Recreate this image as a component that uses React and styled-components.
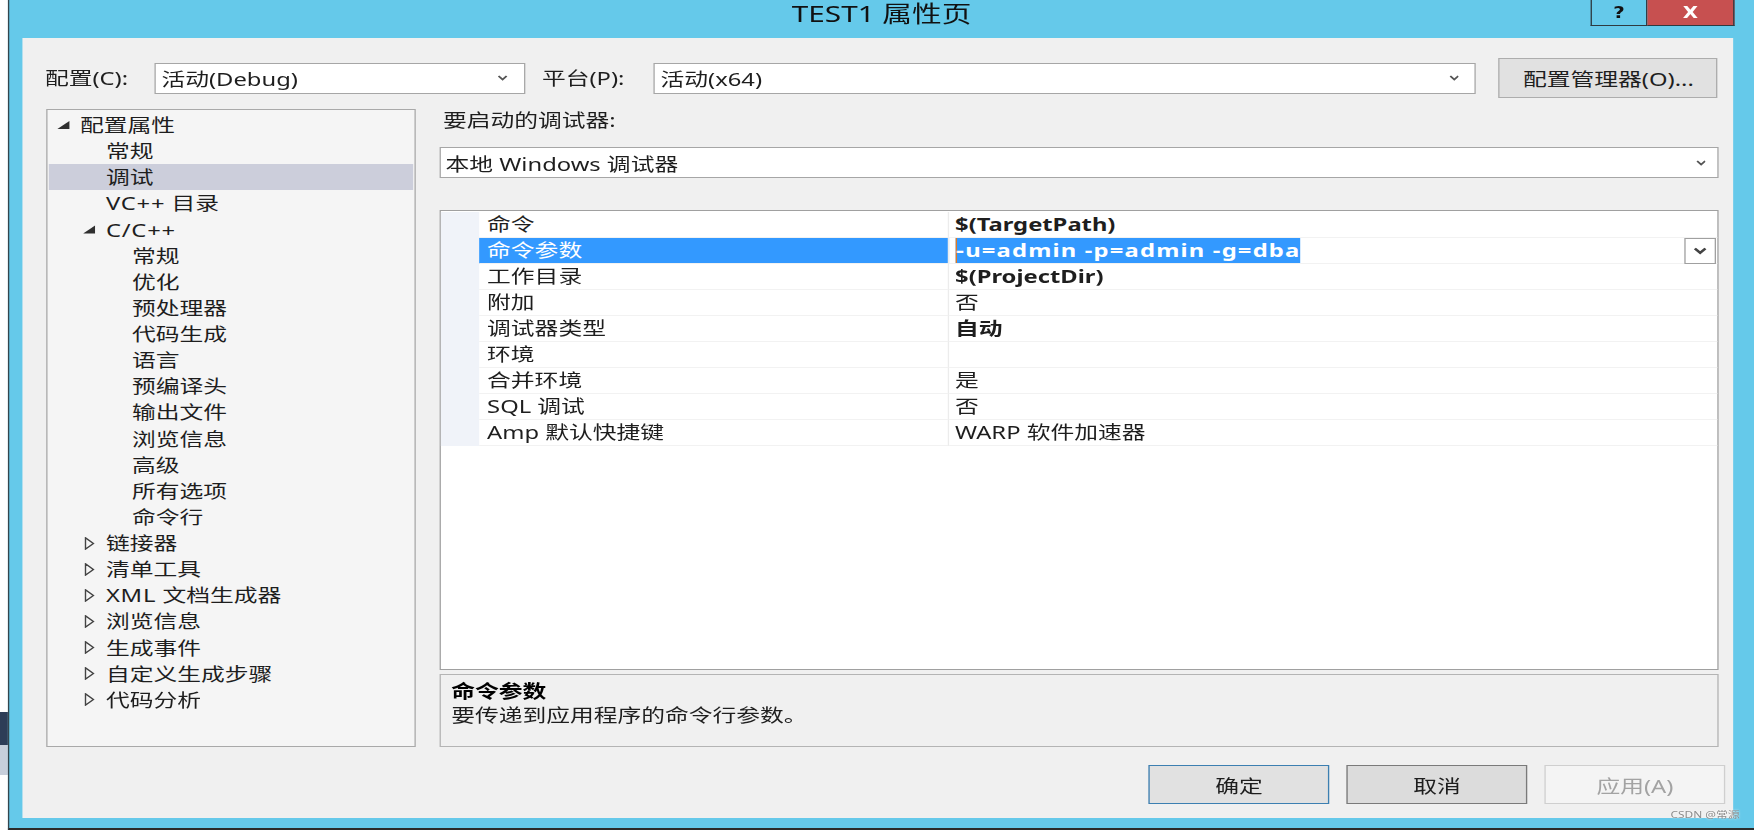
import React from "react";
import styled, { createGlobalStyle } from "styled-components";

// the captured dialog is stretched horizontally, so the page is laid out narrow and widened
const STRETCH = 1.32;

const GlobalStyle = createGlobalStyle`
  html, body { margin: 0; padding: 0; background: #fff; overflow: hidden; }
  body {
    font-family: "Noto Sans", "Noto Sans CJK SC", sans-serif;
    font-size: 18px;
    color: #1e1e1e;
  }
  * { box-sizing: border-box; }
`;

const Screen = styled.div`
  display: flex;
  width: ${1754 / STRETCH}px;
  height: 830px;
  transform: scaleX(${STRETCH});
  transform-origin: 0 0;
`;

const Backdrop = styled.div`
  width: ${8 / STRETCH}px;
  flex-shrink: 0;
  display: flex;
  flex-direction: column;
  background: #fff;
`;

const BackdropPatch = styled.div`
  height: ${(p) => p.$h}px;
  margin-top: ${(p) => p.$top || 0}px;
  background: ${(p) => p.$color};
`;

const Window = styled.div`
  position: relative;
  flex: 1;
  display: flex;
  flex-direction: column;
  background: #65c9ea;
  border-left: 1px solid #34454d;
  border-bottom: 2px solid #2b2b2b;
`;

const TitleBar = styled.div`
  height: 38px;
  flex-shrink: 0;
  display: grid;
  grid-template-columns: 1fr auto 1fr;
  align-items: start;
`;

const Title = styled.div`
  font-size: 22.5px;
  line-height: 28px;
  color: #111;
  white-space: nowrap;
`;

const CaptionButtons = styled.div`
  justify-self: end;
  display: flex;
  margin-right: 14.4px;
`;

const CaptionButton = styled.div`
  width: ${(p) => p.$w}px;
  height: 26px;
  display: flex;
  align-items: center;
  justify-content: center;
  background: ${(p) => (p.$close ? "#c75050" : "transparent")};
  border: 1px solid #2e3a40;
  border-top: none;
  & + & { border-left: none; }
  color: ${(p) => (p.$close ? "#fff" : "#111")};
  font-family: "DejaVu Sans", sans-serif;
  font-weight: bold;
  font-size: 15px;
`;

const Client = styled.div`
  flex: 1;
  display: flex;
  flex-direction: column;
  background: #f0f0f0;
  margin: 0 15.9px 10px 10.3px;
`;

const TopRow = styled.div`
  display: flex;
  align-items: center;
  height: 40px;
  margin-top: 20px;
  padding-left: 16.7px;
`;

const FieldLabel = styled.div`
  width: ${(p) => p.$w}px;
  margin-left: ${(p) => p.$ml || 0}px;
  flex-shrink: 0;
  white-space: nowrap;
  line-height: 22px;
`;

const Combo = styled.div`
  width: ${(p) => (p.$w ? `${p.$w}px` : "auto")};
  flex-shrink: 0;
  height: 31px;
  margin-top: ${(p) => p.$mt || 0}px;
  background: #fff;
  border: 1px solid #a6a6a6;
  display: flex;
  align-items: center;
  justify-content: space-between;
  padding: 0 ${(p) => p.$pr || 12}px 0 4px;
  white-space: nowrap;
`;

const PushButton = styled.button`
  font: inherit;
  color: inherit;
  width: ${(p) => p.$w}px;
  height: ${(p) => p.$h || 40}px;
  margin-left: ${(p) => p.$ml || 0}px;
  padding: 0;
  flex-shrink: 0;
  background: #e1e1e1;
  border: 1px solid #adadad;
  white-space: nowrap;
`;

const Main = styled.div`
  display: flex;
  gap: 17.4px;
  height: 638px;
  margin-top: 11px;
  padding: 0 10.6px 0 17.4px;
`;

const Tree = styled.ul`
  width: 280.4px;
  flex-shrink: 0;
  margin: 0;
  padding: 2px 1px 0;
  list-style: none;
  background: #f5f5f5;
  border: 1px solid #a9a9a9;
`;

const TreeRow = styled.li`
  height: 26.14px;
  line-height: 26.14px;
  display: flex;
  align-items: center;
  padding-left: ${(p) => 6.3 + p.$level * 19.7}px;
  background: ${(p) => (p.$selected ? "#cccedb" : "transparent")};
  white-space: nowrap;
`;

const Twisty = styled.span`
  width: 17.5px;
  flex-shrink: 0;
  display: flex;
  align-items: center;
  padding-left: ${(p) => (p.$closed ? 1.5 : 0)}px;
`;

const Latin = styled.span`
  letter-spacing: 0.6px;
`;

const RightPane = styled.div`
  flex: 1;
  min-width: 0;
  display: flex;
  flex-direction: column;
`;

const PaneLabel = styled.div`
  height: 22px;
  line-height: 22px;
  padding-left: 3px;
`;

const Grid = styled.div`
  margin-top: 32px;
  height: 460px;
  background: #fff;
  border: 1px solid #a0a0a0;
  padding-top: 1px;
`;

const GridRow = styled.div`
  display: flex;
  height: 26px;
`;

const Gutter = styled.div`
  width: 29.5px;
  flex-shrink: 0;
  background: #f0f3f9;
`;

const NameCell = styled.div`
  width: 356px;
  flex-shrink: 0;
  padding-left: 6px;
  line-height: 25px;
  white-space: nowrap;
  border-bottom: 1px solid #f2f2f2;
  border-right: 1px solid #ececec;
  background: ${(p) => (p.$selected ? "#3399ff" : "transparent")};
  color: ${(p) => (p.$selected ? "#fff" : "inherit")};
`;

const ValueCell = styled.div`
  flex: 1;
  display: flex;
  align-items: center;
  justify-content: space-between;
  padding-left: 4.5px;
  line-height: 25px;
  white-space: nowrap;
  border-bottom: 1px solid #f2f2f2;
  font-weight: ${(p) => (p.$bold ? 700 : 400)};
`;

const EditedValue = styled.span`
  background: #3399ff;
  color: #fff;
  font-weight: 700;
  letter-spacing: 0.9px;
  border-left: 1px solid #e07b24;
  line-height: 25px;
`;

const DropButton = styled.div`
  width: 23.5px;
  height: 26px;
  margin-right: 1.5px;
  align-self: flex-start;
  display: flex;
  align-items: center;
  justify-content: center;
  background: #fff;
  border: 1px solid #a0a0a0;
`;

const Description = styled.div`
  margin-top: 4px;
  height: 73px;
  border: 1px solid #b4b4b4;
  background: #f0f0f0;
  padding: 4px 0 0 8.3px;
  line-height: 24px;
`;

const DescTitle = styled.div`
  font-weight: 700;
  color: #000;
`;

const ButtonRow = styled.div`
  display: flex;
  justify-content: flex-end;
  gap: 13.6px;
  margin-top: 18px;
  padding-right: 6.1px;
`;

const DialogButton = styled.button`
  font: inherit;
  width: 136.4px;
  height: 39px;
  padding: 0;
  background: ${(p) => (p.$disabled ? "#f4f4f4" : p.$default ? "#e1e1e1" : "#dcdcdc")};
  border: 1px solid
    ${(p) => (p.$disabled ? "#cfcfcf" : p.$default ? "#3c7fb1" : "#7a7a7a")};
  color: ${(p) => (p.$disabled ? "#a3a3a3" : "#1e1e1e")};
`;

const Watermark = styled.div`
  position: absolute;
  right: 10.8px;
  bottom: 7px;
  font-size: 9px;
  line-height: 12px;
  color: #8c8c8c;
  text-shadow: 0 0 2px #fff;
  white-space: nowrap;
`;

function Chevron({ bold }) {
  return bold ? (
    <svg width="10" height="8" viewBox="0 0 10 8">
      <polyline points="1,1.6 5,5.8 9,1.6" fill="none" stroke="#444" strokeWidth="2.2" />
    </svg>
  ) : (
    <svg width="7.5" height="6" viewBox="0 0 7.5 6">
      <polyline points="0.7,1 3.75,4.6 6.8,1" fill="none" stroke="#555" strokeWidth="1.5" />
    </svg>
  );
}

function OpenTwisty() {
  return (
    <svg width="9.6" height="8.4" viewBox="0 0 10 9" preserveAspectRatio="none">
      <polygon points="10,0 10,9 0,9" fill="#2f2f2f" />
    </svg>
  );
}

function ClosedTwisty() {
  return (
    <svg width="7.6" height="13" viewBox="0 0 7.6 13">
      <polygon points="0.7,0.8 6.8,6.5 0.7,12.2" fill="none" stroke="#444" strokeWidth="1.2" />
    </svg>
  );
}

const treeItems = [
  { text: "配置属性", level: 0, twisty: "open" },
  { text: "常规", level: 1 },
  { text: "调试", level: 1, selected: true },
  { text: "VC++", rest: " 目录", level: 1 },
  { text: "C/C++", level: 1, twisty: "open", latin: true },
  { text: "常规", level: 2 },
  { text: "优化", level: 2 },
  { text: "预处理器", level: 2 },
  { text: "代码生成", level: 2 },
  { text: "语言", level: 2 },
  { text: "预编译头", level: 2 },
  { text: "输出文件", level: 2 },
  { text: "浏览信息", level: 2 },
  { text: "高级", level: 2 },
  { text: "所有选项", level: 2 },
  { text: "命令行", level: 2 },
  { text: "链接器", level: 1, twisty: "closed" },
  { text: "清单工具", level: 1, twisty: "closed" },
  { text: "XML", rest: " 文档生成器", level: 1, twisty: "closed" },
  { text: "浏览信息", level: 1, twisty: "closed" },
  { text: "生成事件", level: 1, twisty: "closed" },
  { text: "自定义生成步骤", level: 1, twisty: "closed" },
  { text: "代码分析", level: 1, twisty: "closed" },
];

const properties = [
  { name: "命令", value: "$(TargetPath)", bold: true },
  { name: "命令参数", value: "-u=admin -p=admin -g=dba", editing: true },
  { name: "工作目录", value: "$(ProjectDir)", bold: true },
  { name: "附加", value: "否" },
  { name: "调试器类型", value: "自动", bold: true },
  { name: "环境", value: "" },
  { name: "合并环境", value: "是" },
  { name: "SQL 调试", value: "否" },
  { name: "Amp 默认快捷键", value: "WARP 软件加速器" },
];

export default function App() {
  return (
    <>
      <GlobalStyle />
      <Screen>
        <Backdrop>
          <BackdropPatch $top={712} $h={33} $color="#2d3d57" />
          <BackdropPatch $h={30} $color="#c7cfdb" />
        </Backdrop>

        <Window>
          <TitleBar>
            <span />
            <Title>TEST1 属性页</Title>
            <CaptionButtons>
              <CaptionButton $w={42.4}>?</CaptionButton>
              <CaptionButton $w={66.7} $close>X</CaptionButton>
            </CaptionButtons>
          </TitleBar>

          <Client>
            <TopRow>
              <FieldLabel $w={83.3}>配置(C):</FieldLabel>
              <Combo $w={280.3}>
                <span>活动(Debug)</span>
                <Chevron />
              </Combo>
              <FieldLabel $w={84.9} $ml={12.9}>平台(P):</FieldLabel>
              <Combo $w={622.7}>
                <span>活动(x64)</span>
                <Chevron />
              </Combo>
              <PushButton $w={166} $ml={17.4}>配置管理器(O)...</PushButton>
            </TopRow>

            <Main>
              <Tree>
                {treeItems.map((item, i) => (
                  <TreeRow key={i} $level={item.level} $selected={item.selected}>
                    <Twisty $closed={item.twisty === "closed"}>
                      {item.twisty === "open" && <OpenTwisty />}
                      {item.twisty === "closed" && <ClosedTwisty />}
                    </Twisty>
                    {item.rest || item.latin ? (
                      <span>
                        <Latin>{item.text}</Latin>
                        {item.rest}
                      </span>
                    ) : (
                      item.text
                    )}
                  </TreeRow>
                ))}
              </Tree>

              <RightPane>
                <PaneLabel>要启动的调试器:</PaneLabel>
                <Combo $mt={16} $pr={9}>
                  <span>本地 Windows 调试器</span>
                  <Chevron />
                </Combo>

                <Grid>
                  {properties.map((prop) => (
                    <GridRow key={prop.name}>
                      <Gutter />
                      <NameCell $selected={prop.editing}>{prop.name}</NameCell>
                      <ValueCell $bold={prop.bold}>
                        {prop.editing ? (
                          <>
                            <EditedValue>{prop.value}</EditedValue>
                            <DropButton>
                              <Chevron bold />
                            </DropButton>
                          </>
                        ) : (
                          <span>{prop.value}</span>
                        )}
                      </ValueCell>
                    </GridRow>
                  ))}
                </Grid>

                <Description>
                  <DescTitle>命令参数</DescTitle>
                  <div>要传递到应用程序的命令行参数。</div>
                </Description>
              </RightPane>
            </Main>

            <ButtonRow>
              <DialogButton $default>确定</DialogButton>
              <DialogButton>取消</DialogButton>
              <DialogButton $disabled>应用(A)</DialogButton>
            </ButtonRow>
          </Client>

          <Watermark>CSDN @常源</Watermark>
        </Window>
      </Screen>
    </>
  );
}
